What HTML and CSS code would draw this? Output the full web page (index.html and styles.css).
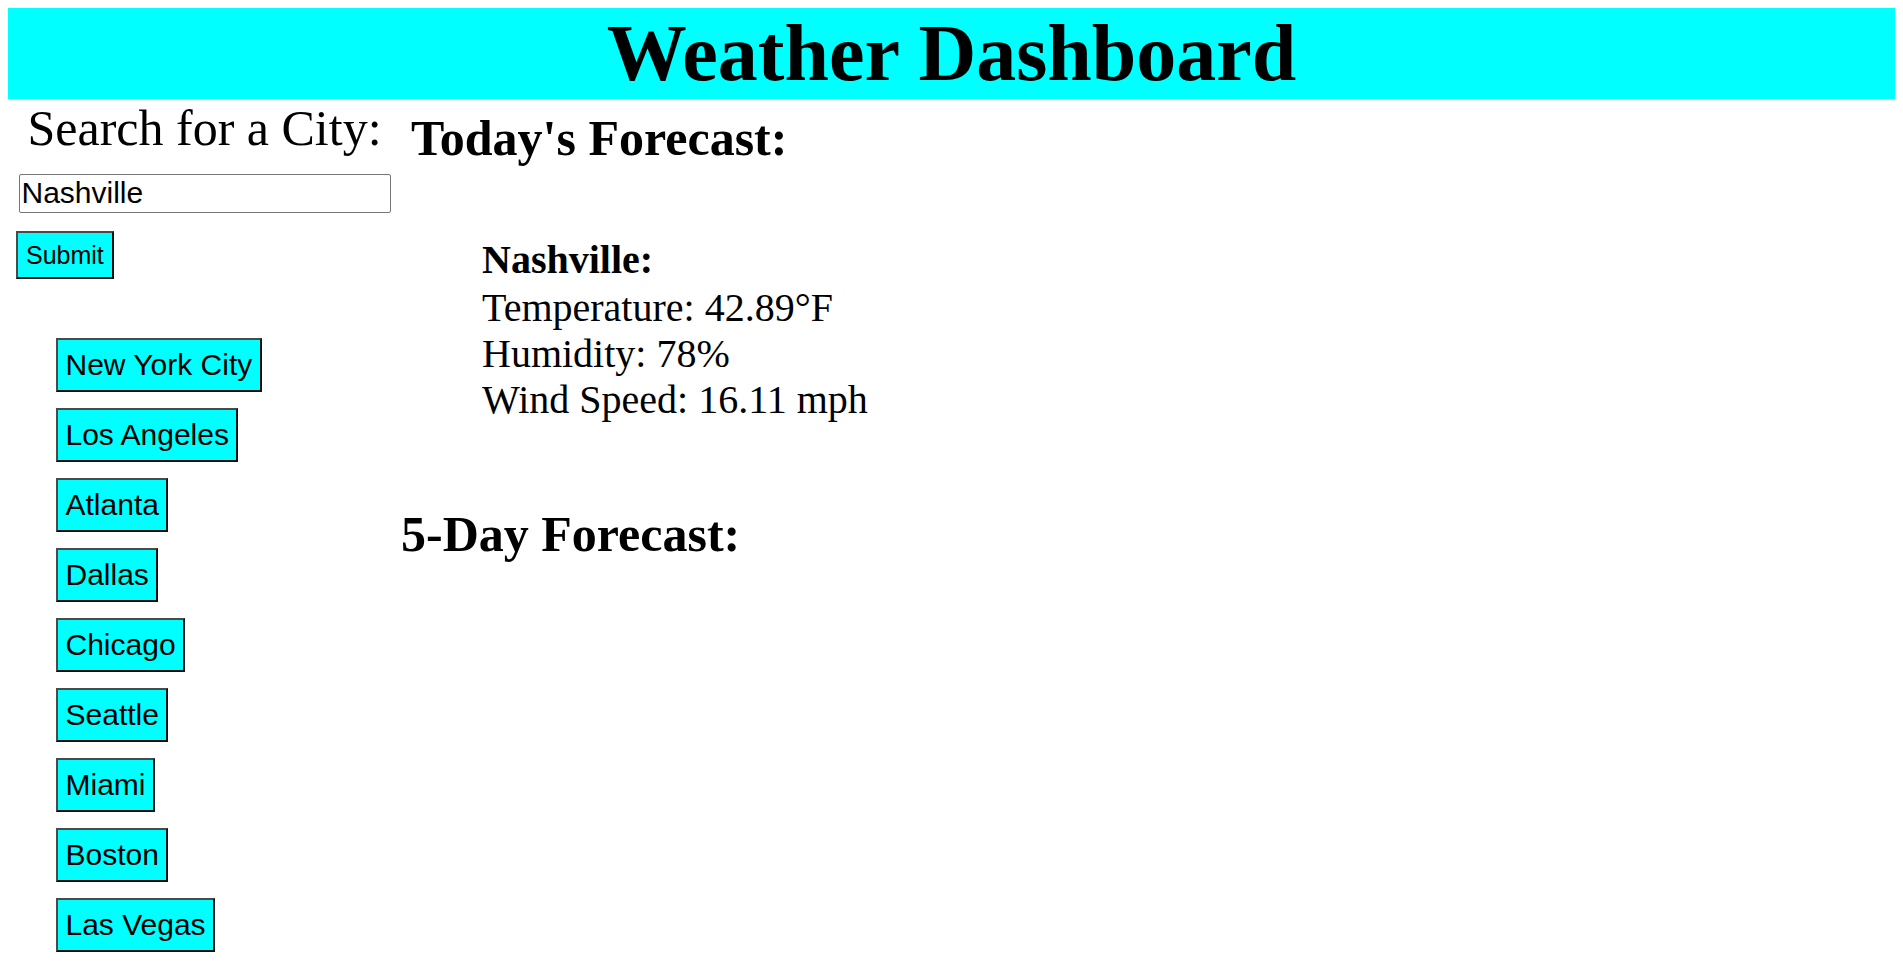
FILE: index.html
```html
<!DOCTYPE html>
<html lang="en">
<head>
<meta charset="utf-8">
<title>Weather Dashboard</title>
<link rel="stylesheet" href="styles.css">
</head>
<body>
<header class="page-header">
  <h1 class="page-title">Weather Dashboard</h1>
</header>
<div class="layout">
  <aside class="sidebar">
    <h2 class="search-title">Search for a City:</h2>
    <input class="city-input" type="text" value="Nashville">
    <button class="submit-btn" type="button">Submit</button>
    <ul class="city-list">
      <li><button class="city-btn" type="button">New York City</button></li>
      <li><button class="city-btn" type="button">Los Angeles</button></li>
      <li><button class="city-btn" type="button">Atlanta</button></li>
      <li><button class="city-btn" type="button">Dallas</button></li>
      <li><button class="city-btn" type="button">Chicago</button></li>
      <li><button class="city-btn" type="button">Seattle</button></li>
      <li><button class="city-btn" type="button">Miami</button></li>
      <li><button class="city-btn" type="button">Boston</button></li>
      <li><button class="city-btn" type="button">Las Vegas</button></li>
    </ul>
  </aside>
  <main class="content">
    <section class="today">
      <h2 class="section-title">Today's Forecast:</h2>
      <div class="current">
        <h3 class="city-name">Nashville:</h3>
        <p class="stat">Temperature: 42.89°F</p>
        <p class="stat">Humidity: 78%</p>
        <p class="stat">Wind Speed: 16.11 mph</p>
      </div>
    </section>
    <h2 class="section-title five-day">5-Day Forecast:</h2>
  </main>
</div>
</body>
</html>
```

FILE: styles.css
```css
html, body {
  background: #ffffff;
}

body {
  margin: 8px;
  font-family: "Liberation Serif", "Times New Roman", serif;
  color: #000000;
}

.page-header {
  background: #00ffff;
}

.page-title {
  margin: 0;
  font-size: 80px;
  line-height: 91px;
  font-weight: bold;
  text-align: center;
}

.layout {
  display: flex;
  align-items: flex-start;
}

.sidebar {
  width: 393px;
  box-sizing: border-box;
  padding: 0 8px;
  display: flex;
  flex-direction: column;
  align-items: flex-start;
  flex-shrink: 0;
}

.search-title {
  margin: 1px 0 0 0;
  align-self: stretch;
  text-align: center;
  font-size: 50px;
  font-weight: normal;
  line-height: 57.5px;
  white-space: nowrap;
}

.city-input {
  align-self: center;
  margin: 16px 0 0 0;
  box-sizing: border-box;
  width: 372px;
  height: 39px;
  padding: 1px 2px;
  border: 1px solid #767676;
  border-radius: 2px;
  font-family: "Liberation Sans", Arial, sans-serif;
  font-size: 30px;
  color: #000000;
  background: #ffffff;
}

.submit-btn {
  margin: 18.5px 0 0 0;
  padding: 8px;
  font-family: "Liberation Sans", Arial, sans-serif;
  font-size: 25px;
  line-height: 28px;
  color: #000000;
  background: #00ffff;
  border: 2px solid;
  border-color: #4a4a4a #111111 #111111 #4a4a4a;
}

.city-list {
  list-style: none;
  margin: 58.5px 0 0 0;
  padding: 0 0 0 40px;
  display: flex;
  flex-direction: column;
  align-items: flex-start;
  gap: 16px;
}

.city-list li {
  margin: 0;
  padding: 0;
}

.city-btn {
  margin: 0;
  padding: 8px 7.5px;
  font-family: "Liberation Sans", Arial, sans-serif;
  font-size: 30px;
  line-height: 34px;
  color: #000000;
  background: #00ffff;
  border: 2px solid;
  border-color: #4a4a4a #111111 #111111 #4a4a4a;
  white-space: nowrap;
}

.content {
  flex: 1;
}

.section-title {
  margin: 0;
  font-size: 50px;
  font-weight: bold;
  line-height: 57px;
}

.today {
  margin: 10.5px 0 0 10px;
}

.current {
  margin: 70px 0 0 71px;
}

.city-name {
  margin: 0 0 2.4px 0;
  font-size: 40px;
  font-weight: bold;
  line-height: 46px;
}

.stat {
  margin: 0;
  font-size: 40px;
  line-height: 46px;
}

.five-day {
  margin-top: 83px;
}
```
